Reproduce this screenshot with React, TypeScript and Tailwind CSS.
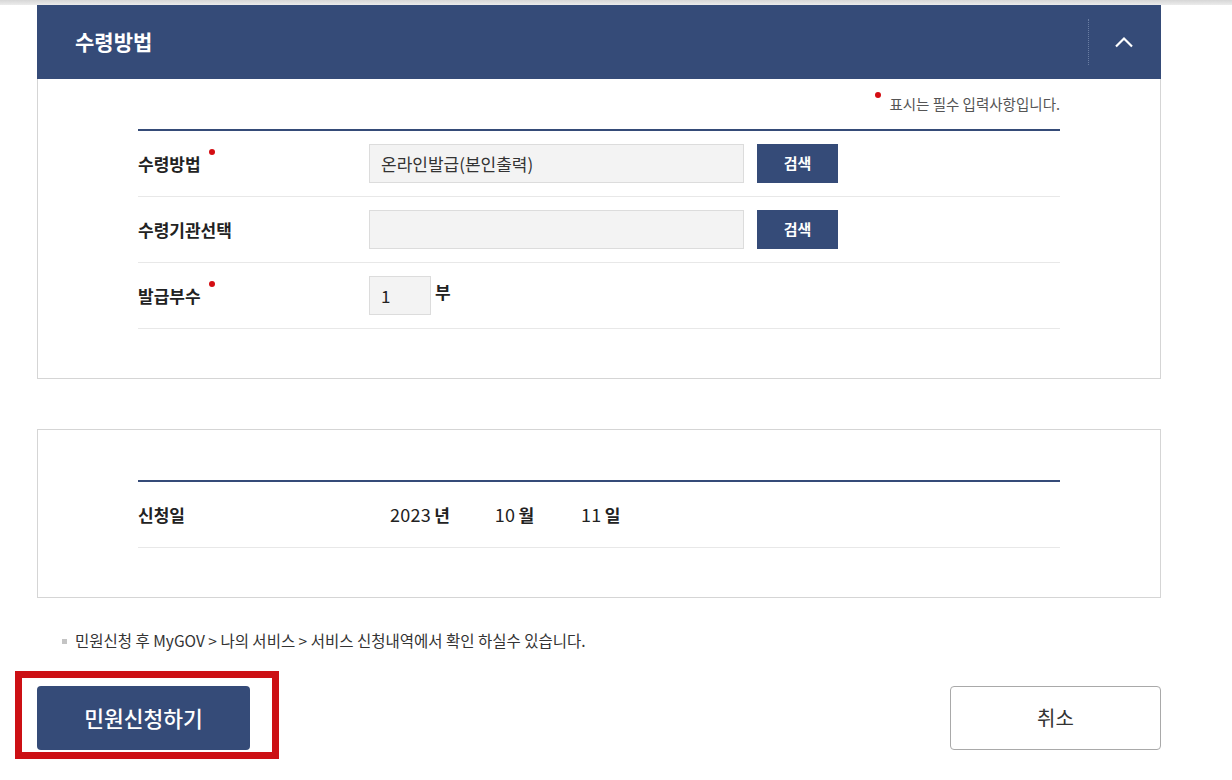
import React from "react";

const FONT = { fontFamily: '"Noto Sans CJK KR", "Noto Sans", sans-serif' };

const Dot = ({ className = "" }: { className?: string }) => (
  <span className={`inline-block w-[6px] h-[6px] rounded-full bg-[#d40d12] ${className}`} />
);

const Row = ({
  label,
  required,
  children,
}: {
  label: string;
  required?: boolean;
  children: React.ReactNode;
}) => (
  <div className="flex items-center h-[66px] border-b border-[#e8e8e8]">
    <div className="w-[231px] flex items-center text-[17px] font-bold text-[#222]">
      <span>{label}</span>
      {required && <Dot className="ml-[8px] relative -top-[12px]" />}
    </div>
    <div className="flex items-center">{children}</div>
  </div>
);

const SearchButton = () => (
  <button className="ml-[13px] w-[81px] h-[39px] bg-[#354b78] text-white text-[15px] font-semibold">
    검색
  </button>
);

export default function App() {
  return (
    <div className="bg-white min-h-[780px] w-[1232px]" style={FONT}>
      <div className="h-[5px] bg-gradient-to-b from-[#d6d6d6] to-[#ececec]" />

      <div className="ml-[37px] w-[1124px]">
        {/* 수령방법 panel */}
        <div className="h-[74px] bg-[#354b78] flex items-center pl-[38px] pr-[27px]">
          <h2 className="text-white text-[21px] font-bold flex-1">수령방법</h2>
          <div className="h-[46px] border-l border-dotted border-[#6a7ea3] mr-[25px]" />
          <svg width="20" height="12" viewBox="0 0 20 12" fill="none">
            <path d="M2 10.5 L10 2.5 L18 10.5" stroke="white" strokeWidth="2.2" />
          </svg>
        </div>

        <div className="h-[300px] border border-t-0 border-[#d5d5d5] px-[100px] pt-[13px]">
          <div className="flex justify-end items-start h-[20px] text-[14.5px] text-[#555] leading-[20px]">
            <Dot className="mr-[8px]" />
            <span className="mt-[2px]">표시는 필수 입력사항입니다.</span>
          </div>

          <div className="mt-[17px] border-t-2 border-[#354b78]">
            <Row label="수령방법" required>
              <div className="w-[375px] h-[39px] bg-[#f3f3f3] border border-[#dcdcdc] flex items-center pl-[11px] text-[17px] text-[#333]">
                온라인발급(본인출력)
              </div>
              <SearchButton />
            </Row>
            <Row label="수령기관선택">
              <div className="w-[375px] h-[39px] bg-[#f3f3f3] border border-[#dcdcdc]" />
              <SearchButton />
            </Row>
            <Row label="발급부수" required>
              <div className="w-[62px] h-[39px] bg-[#f3f3f3] border border-[#dcdcdc] flex items-center pl-[11px] text-[17px] text-[#222]">
                1
              </div>
              <span className="ml-[4px] -mt-[8px] text-[17px] font-bold text-[#222]">부</span>
            </Row>
          </div>
        </div>

        {/* 신청일 panel */}
        <div className="mt-[50px] h-[169px] border border-[#d5d5d5] px-[100px] pt-[50px]">
          <div className="border-t-2 border-[#354b78]">
            <div className="flex items-center h-[66px] border-b border-[#e8e8e8] text-[#222]">
              <div className="w-[231px] text-[17px] font-bold">신청일</div>
              <div className="flex items-center pl-[21px]">
                <span className="text-[18px] tracking-[0.3px]">2023</span>
                <span className="ml-[3px] text-[17px] font-bold">년</span>
                <span className="ml-[45px] text-[18px] tracking-[0.3px]">10</span>
                <span className="ml-[3px] text-[17px] font-bold">월</span>
                <span className="ml-[47px] text-[18px] tracking-[0.3px]">11</span>
                <span className="ml-[3px] text-[17px] font-bold">일</span>
              </div>
            </div>
          </div>
        </div>

        {/* notice */}
        <div className="mt-[33px] flex items-center h-[20px] pl-[25px] text-[15.5px] text-[#333]">
          <span className="w-[5px] h-[5px] bg-[#c4c4c4] mr-[8px]" />
          <span>민원신청 후 MyGOV &gt; 나의 서비스 &gt; 서비스 신청내역에서 확인 하실수 있습니다.</span>
        </div>

        {/* buttons */}
        <div className="mt-[35px] flex justify-between">
          <div className="relative">
            <button className="w-[213px] h-[64px] rounded-[4px] bg-[#354b78] text-white text-[21.5px] font-medium">
              민원신청하기
            </button>
            <div className="absolute -left-[22px] -top-[15px] w-[264px] h-[88px] border-[7px] border-[#cc1014] pointer-events-none" />
          </div>
          <button className="w-[211px] h-[64px] rounded-[4px] bg-white border border-[#a9a9a9] text-[20px] text-[#333]">
            취소
          </button>
        </div>
      </div>
    </div>
  );
}
